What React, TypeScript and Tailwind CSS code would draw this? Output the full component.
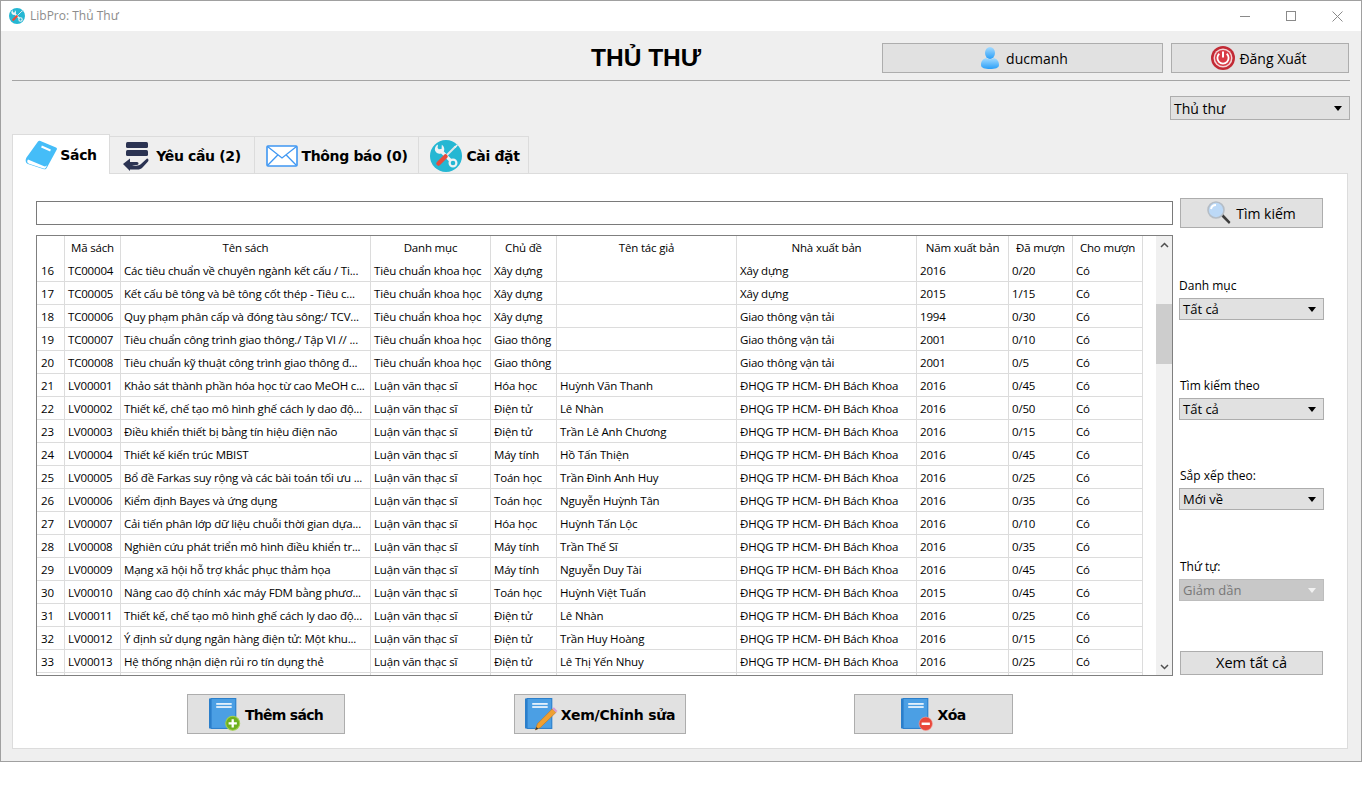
import type { ReactNode } from "react";

const GTVT = "Giao thông vận tải";
const TCKH = "Tiêu chuẩn khoa học";
const LVTS = "Luận văn thạc sĩ";
const BK = "ĐHQG TP HCM- ĐH Bách Khoa";

const rows = [
  ["16", "TC00004", "Các tiêu chuẩn về chuyên ngành kết cấu / Ti...", TCKH, "Xây dựng", "", "Xây dựng", "2016", "0/20", "Có"],
  ["17", "TC00005", "Kết cấu bê tông và bê tông cốt thép - Tiêu c...", TCKH, "Xây dựng", "", "Xây dựng", "2015", "1/15", "Có"],
  ["18", "TC00006", "Quy phạm phân cấp và đóng tàu sông:/ TCV...", TCKH, "Xây dựng", "", GTVT, "1994", "0/30", "Có"],
  ["19", "TC00007", "Tiêu chuẩn công trình giao thông./ Tập VI // ...", TCKH, "Giao thông", "", GTVT, "2001", "0/10", "Có"],
  ["20", "TC00008", "Tiêu chuẩn kỹ thuật công trình giao thông đ...", TCKH, "Giao thông", "", GTVT, "2001", "0/5", "Có"],
  ["21", "LV00001", "Khảo sát thành phần hóa học từ cao MeOH c...", LVTS, "Hóa học", "Huỳnh Văn Thanh", BK, "2016", "0/45", "Có"],
  ["22", "LV00002", "Thiết kế, chế tạo mô hình ghế cách ly dao độ...", LVTS, "Điện tử", "Lê Nhàn", BK, "2016", "0/50", "Có"],
  ["23", "LV00003", "Điều khiển thiết bị bằng tín hiệu điện não", LVTS, "Điện tử", "Trần Lê Anh Chương", BK, "2016", "0/15", "Có"],
  ["24", "LV00004", "Thiết kế kiến trúc MBIST", LVTS, "Máy tính", "Hồ Tấn Thiện", BK, "2016", "0/45", "Có"],
  ["25", "LV00005", "Bổ đề Farkas suy rộng và các bài toán tối ưu ...", LVTS, "Toán học", "Trần Đình Anh Huy", BK, "2016", "0/25", "Có"],
  ["26", "LV00006", "Kiểm định Bayes và ứng dụng", LVTS, "Toán học", "Nguyễn Huỳnh Tân", BK, "2016", "0/35", "Có"],
  ["27", "LV00007", "Cải tiến phân lớp dữ liệu chuỗi thời gian dựa...", LVTS, "Hóa học", "Huỳnh Tấn Lộc", BK, "2016", "0/10", "Có"],
  ["28", "LV00008", "Nghiên cứu phát triển mô hình điều khiển tr...", LVTS, "Máy tính", "Trần Thế Sĩ", BK, "2016", "0/35", "Có"],
  ["29", "LV00009", "Mạng xã hội hỗ trợ khắc phục thảm họa", LVTS, "Máy tính", "Nguyễn Duy Tài", BK, "2016", "0/45", "Có"],
  ["30", "LV00010", "Nâng cao độ chính xác máy FDM bằng phươ...", LVTS, "Toán học", "Huỳnh Việt Tuấn", BK, "2015", "0/45", "Có"],
  ["31", "LV00011", "Thiết kế, chế tạo mô hình ghế cách ly dao độ...", LVTS, "Điện tử", "Lê Nhàn", BK, "2016", "0/25", "Có"],
  ["32", "LV00012", "Ý định sử dụng ngân hàng điện tử: Một khu...", LVTS, "Điện tử", "Trần Huy Hoàng", BK, "2016", "0/15", "Có"],
  ["33", "LV00013", "Hệ thống nhận diện rủi ro tín dụng thẻ", LVTS, "Điện tử", "Lê Thị Yến Nhuy", BK, "2016", "0/25", "Có"],
  ["", "", "", "", "", "", "", "", "", ""],
];

const headers = ["", "Mã sách", "Tên sách", "Danh mục", "Chủ đề", "Tên tác giả", "Nhà xuất bản", "Năm xuất bản", "Đã mượn", "Cho mượn"];
const colWidths = [28, 56, 250, 120, 66, 180, 180, 92, 64, 70];

function ToolsIcon({ size }: { size: number }) {
  return (
    <svg width={size} height={size} viewBox="0 0 32 32" className="shrink-0">
      <circle cx="16" cy="16" r="16" fill="#25b7d3" />
      {/* wrench */}
      <path d="M10 10L22 22" stroke="#eef2f4" strokeWidth="3.200" />
      <path d="M8 4.500a5 5 0 0 0-2.800 6.500 5 5 0 0 0 6.300 2.300 5 5 0 0 0 2.300-6.300 5 5 0 0 0-2-2.300l-.2 4.200-2.900.3-1.100-1.500z" fill="#eef2f4" />
      <circle cx="23" cy="23" r="3.400" fill="#25b7d3" stroke="#eef2f4" strokeWidth="2.200" />
      {/* screwdriver */}
      <path d="M25.500 6.500L16 16" stroke="#dfe6e9" strokeWidth="2" />
      <path d="M26.800 4.500l1 1-2.300 2.600-1.300-1.300z" fill="#eef2f4" />
      <path d="M15.500 16.500L8.500 23.500" stroke="#e74c3c" strokeWidth="4.500" strokeLinecap="round" />
    </svg>
  );
}

function TiltedBook() {
  return (
    <svg width="33" height="31" viewBox="0 0 33 31" className="shrink-0">
      <path d="M13 1.500c.6-.8 1.500-1 2.400-.6L31 7.500c1 .5 1.200 1.200.8 2L22 27.500c-.8 1.600-2.200 2.300-3.800 1.600L3 24c-2.500-1-3-4-1.500-6.500z" fill="#45bdf8" />
      <path d="M3 19.500c-1.500 1.800-.8 3.500 1 4.200l14.500 4.800c1.300.4 2-.2 2.600-1.200l1-2.100-1 .8c-.8.500-1.600.5-2.600.1z" fill="#fff" />
      <path d="M16.500 6.500l9 4" stroke="#fff" strokeWidth="2" />
    </svg>
  );
}

function RequestIcon() {
  return (
    <svg width="27" height="30" viewBox="0 0 27 30" className="shrink-0">
      <rect x="3" y="1" width="22" height="6" rx="1.500" fill="#2b3352" />
      <rect x="3" y="9" width="22" height="6" rx="1.500" fill="#2b3352" />
      <path d="M0 23l7-5.500V21h7c2 0 2 3 0 3H9c3 1 7 1 9-1l6-5.500c1.500 0 2 2 1 3l-5.500 6c-1.500 1.600-3 2-5 2H7V30z" fill="#2b3352" />
    </svg>
  );
}

function MailIcon() {
  return (
    <svg width="32" height="22" viewBox="0 0 32 22" className="shrink-0">
      <rect x="1" y="1" width="30" height="20" rx="1" fill="#fff" stroke="#3f97f2" strokeWidth="1.600" />
      <path d="M1.500 1.500L16 13 30.500 1.500M1.500 20.500L12 9.800M30.500 20.500L20 9.800" fill="none" stroke="#3f97f2" strokeWidth="1.300" />
    </svg>
  );
}

function UserIcon() {
  return (
    <svg width="18" height="22" viewBox="0 0 18 22" className="shrink-0">
      <defs>
        <linearGradient id="userBlue" x1="0" y1="0" x2="0" y2="1">
          <stop offset="0" stopColor="#a5dbff" />
          <stop offset="1" stopColor="#2a9ff8" />
        </linearGradient>
      </defs>
      <ellipse cx="9" cy="6" rx="5" ry="6" fill="url(#userBlue)" />
      <path d="M5 11c-3 1-5 3-5 7 0 3 4 4 9 4s9-1 9-4c0-4-2-6-5-7-2 1.500-6 1.500-8 0z" fill="url(#userBlue)" />
    </svg>
  );
}

function PowerIcon() {
  return (
    <svg width="24" height="24" viewBox="0 0 24 24" className="shrink-0">
      <circle cx="12" cy="12" r="12" fill="#c22a35" />
      <circle cx="12" cy="12" r="9.500" fill="#f4d5d7" />
      <circle cx="12" cy="12" r="8" fill="#d93a45" />
      <path d="M8.300 7.800a5.600 5.600 0 1 0 7.400 0" fill="none" stroke="#fff" strokeWidth="1.800" />
      <path d="M12 5.500v6" stroke="#fff" strokeWidth="2" />
    </svg>
  );
}

function SearchIcon() {
  return (
    <svg width="24" height="24" viewBox="0 0 24 24" className="shrink-0">
      <path d="M13.500 14.500l2-2 8 8.500-1.500 2z" fill="#3d3d3d" />
      <circle cx="9" cy="9" r="8" fill="#bcd9f7" stroke="#b5bdc6" strokeWidth="1.600" />
      <path d="M4 8a5 5 0 0 1 5-4" fill="none" stroke="#fff" strokeWidth="2" />
    </svg>
  );
}

function BookBase({ badge }: { badge: ReactNode }) {
  return (
    <svg width="33" height="33" viewBox="0 0 32 32" className="shrink-0">
      <rect x="0" y="0.500" width="26" height="29" fill="#2b7fcb" />
      <rect x="2" y="0.500" width="24" height="29" fill="#4b9fe4" stroke="#2b7fcb" />
      <rect x="7" y="5" width="15" height="1.500" fill="#fff" />
      <rect x="7" y="8" width="15" height="1.500" fill="#fff" />
      {badge}
    </svg>
  );
}

function AddBook() {
  return (
    <BookBase
      badge={
        <>
          <circle cx="23" cy="24.500" r="6.800" fill="#6fb01f" stroke="#a3d14e" />
          <path d="M23 20.500v8M19 24.500h8" stroke="#fff" strokeWidth="2.200" />
        </>
      }
    />
  );
}

function EditBook() {
  return (
    <BookBase
      badge={
        <>
          <path d="M10 31l2-6L26.500 10.500l3.500 3.500L15 28.500z" fill="#f0a030" stroke="#b9772a" strokeWidth=".6" />
          <path d="M26.500 10.500l1.500-1.500 3.500 3.500-1.500 1.500z" fill="#d99ad0" />
          <path d="M10 31l1-3 2 1.800z" fill="#333" />
        </>
      }
    />
  );
}

function DeleteBook() {
  return (
    <BookBase
      badge={
        <>
          <circle cx="24" cy="25" r="6.500" fill="#e9483b" stroke="#f0a09a" strokeWidth=".6" />
          <rect x="20" y="23.800" width="8" height="2.400" fill="#fff" />
        </>
      }
    />
  );
}

function Arrow({ disabled }: { disabled?: boolean }) {
  return (
    <svg width="8" height="5" viewBox="0 0 8 5" className="shrink-0">
      <path d="M0 0h8L4 5z" fill={disabled ? "#f2f2f2" : "#000"} />
    </svg>
  );
}

function Select({ label, disabled, className }: { label: string; disabled?: boolean; className: string }) {
  return (
    <div
      className={`flex items-center justify-between border pl-[3px] pr-[7px] text-[13px] ${className} ${
        disabled ? "border-[#bdbdbd] bg-[#c8c8c8] text-[#777]" : "border-[#adadad] bg-[#e1e1e1] text-black"
      }`}
    >
      <span>{label}</span>
      <Arrow disabled={disabled} />
    </div>
  );
}

function ActionButton({ icon, label, className, labelClass }: { icon: ReactNode; label: string; className: string; labelClass: string }) {
  return (
    <button className={`flex h-10 items-center justify-center gap-[3px] border border-[#adadad] bg-[#e1e1e1] ${className}`}>
      {icon}
      <span className={`mt-[2px] font-['DejaVu_Sans'] text-[14px] font-bold text-black ${labelClass}`}>{label}</span>
    </button>
  );
}

function Tab({ icon, label, active, className }: { icon: ReactNode; label: string; active?: boolean; className: string }) {
  return (
    <div
      className={`flex items-center justify-center border-t border-r border-[#dcdcdc] pt-[2px] ${className} ${
        active ? "relative z-10 -mb-px h-[40px] border-l bg-white" : "h-[37px] bg-[#efefef]"
      }`}
    >
      {icon}
      <span className="font-['DejaVu_Sans'] text-[14px] font-bold tracking-[-0.35px] text-black">{label}</span>
    </div>
  );
}

export default function App() {
  return (
    <div className="h-[810px] w-[1362px] overflow-hidden bg-white font-['Open_Sans','Noto_Sans',sans-serif] text-black">
      <div className="flex h-[762px] flex-col border border-[#a0a0a0] bg-[#efefef]">
        {/* title bar */}
        <div className="flex h-[30px] shrink-0 items-center bg-white pl-[8px]">
          <ToolsIcon size={16} />
          <span className="ml-[5px] text-[12px] text-[#8c8c8c]">LibPro: Thủ Thư</span>
          <div className="ml-auto flex items-center gap-[36px] pr-[18px]">
            <div className="h-px w-[10px] bg-[#8a8a8a]" />
            <div className="h-[10px] w-[10px] border border-[#8a8a8a]" />
            <svg width="11" height="11" viewBox="0 0 11 11">
              <path d="M0.500 0.500l10 10M10.500 0.500l-10 10" stroke="#8a8a8a" />
            </svg>
          </div>
        </div>

        {/* header */}
        <div className="mx-[11px] flex h-[50px] shrink-0 items-start border-b border-[#a5a5a5] pt-[12px]">
          <h1 className="ml-[579px] w-[112px] whitespace-nowrap font-['Liberation_Sans'] text-[24.500px] leading-[30px] font-bold">THỦ THƯ</h1>
          <button className="ml-[179px] flex h-[30px] w-[281px] items-center justify-center gap-[7px] border border-[#adadad] bg-[#e1e1e1] pl-[4px] text-[14px]">
            <UserIcon />
            ducmanh
          </button>
          <button className="ml-[8px] flex h-[30px] w-[178px] items-center justify-center gap-[4px] border border-[#adadad] bg-[#e1e1e1] pr-[2px] text-[14px]">
            <PowerIcon />
            Đăng Xuất
          </button>
        </div>

        <div className="mt-[15px] flex shrink-0 justify-end pr-[11px]">
          <Select label="Thủ thư" className="h-6 w-[180px] !text-[14px]" />
        </div>

        {/* tabs */}
        <div className="mt-[14px] ml-[11px] flex h-[39px] shrink-0 items-end">
          <Tab active icon={<TiltedBook />} label="Sách" className="w-[98px] gap-[2px]" />
          <Tab icon={<RequestIcon />} label="Yêu cầu (2)" className="w-[145px] gap-[6px]" />
          <Tab icon={<MailIcon />} label="Thông báo (0)" className="w-[164px] gap-[4px]" />
          <Tab icon={<ToolsIcon size={32} />} label="Cài đặt" className="w-[110px] gap-[4px] pl-[3px]" />
        </div>

        {/* panel */}
        <div className="ml-[11px] flex h-[576px] w-[1336px] shrink-0 flex-col border border-[#dcdcdc] bg-white">
          <div className="mt-[24px] flex items-center pl-[23px]">
            <div className="h-6 w-[1137px] border border-[#7a7a7a] bg-white" />
            <button className="ml-[7px] flex h-[30px] w-[143px] items-center justify-center gap-[5px] border border-[#adadad] bg-[#e1e1e1] text-[14px]">
              <SearchIcon />
              Tìm kiếm
            </button>
          </div>

          <div className="mt-[7px] flex pl-[23px]">
            {/* table */}
            <div className="flex h-[441px] w-[1137px] border border-[#7f7f7f]">
              <div className="h-full w-[1106px] shrink-0 overflow-hidden">
                <table className="w-[1106px] table-fixed border-separate border-spacing-0 text-[11.500px] tracking-[-0.180px]">
                  <colgroup>
                    {colWidths.map((w, i) => (
                      <col key={i} style={{ width: w }} />
                    ))}
                  </colgroup>
                  <thead>
                    <tr className="h-[23px]">
                      {headers.map((h, i) => (
                        <th key={i} className="border-r border-[#dcdcdc] p-0 text-center font-normal whitespace-nowrap">
                          {h}
                        </th>
                      ))}
                    </tr>
                  </thead>
                  <tbody>
                    {rows.map((row, r) => (
                      <tr key={r} className="h-[23px]">
                        {row.map((cell, c) => (
                          <td
                            key={c}
                            className={`overflow-hidden border-r border-b border-[#dcdcdc] pt-[2px] pr-0 pb-0 whitespace-nowrap ${
                              c === 0 ? "pl-[4px]" : "pl-[3px]"
                            }`}
                          >
                            {cell}
                          </td>
                        ))}
                      </tr>
                    ))}
                  </tbody>
                </table>
              </div>
              <div className="w-[13px] shrink-0" />
              {/* scrollbar */}
              <div className="flex w-[16px] shrink-0 flex-col items-center bg-[#f0f0f0]">
                <svg width="9" height="6" viewBox="0 0 9 6" className="mt-[6px]">
                  <path d="M1 5l3.500-3.500L8 5" fill="none" stroke="#505050" strokeWidth="1.500" />
                </svg>
                <div className="mt-[56px] h-[60px] w-full bg-[#cdcdcd]" />
                <svg width="9" height="6" viewBox="0 0 9 6" className="mt-auto mb-[5px]">
                  <path d="M1 1l3.500 3.500L8 1" fill="none" stroke="#505050" strokeWidth="1.500" />
                </svg>
              </div>
            </div>

            {/* filters */}
            <div className="ml-[6px] flex w-[145px] flex-col text-[12px] leading-[17px]">
              <span className="mt-[42px]">Danh mục</span>
              <Select label="Tất cả" className="mt-[4px] h-[22px]" />
              <span className="mt-[57px] pl-px">Tìm kiếm theo</span>
              <Select label="Tất cả" className="mt-[4px] h-[22px]" />
              <span className="mt-[47px] pl-px">Sắp xếp theo:</span>
              <Select label="Mới về" className="mt-[4px] h-[22px]" />
              <span className="mt-[48px] pl-px">Thứ tự:</span>
              <Select label="Giảm dần" disabled className="mt-[4px] h-[22px]" />
              <button className="mt-[50px] ml-px h-6 w-[143px] border border-[#adadad] bg-[#e1e1e1] text-[14.500px] leading-none">Xem tất cả</button>
            </div>
          </div>

          <div className="mt-[18px] flex pl-[174px]">
            <ActionButton icon={<AddBook />} label="Thêm sách" className="w-[158px]" labelClass="tracking-[-0.7px]" />
            <ActionButton icon={<EditBook />} label="Xem/Chỉnh sửa" className="ml-[169px] w-[172px]" labelClass="tracking-[-0.2px]" />
            <ActionButton icon={<DeleteBook />} label="Xóa" className="ml-[168px] w-[159px]" labelClass="tracking-[-0.6px]" />
          </div>
        </div>
      </div>
    </div>
  );
}
